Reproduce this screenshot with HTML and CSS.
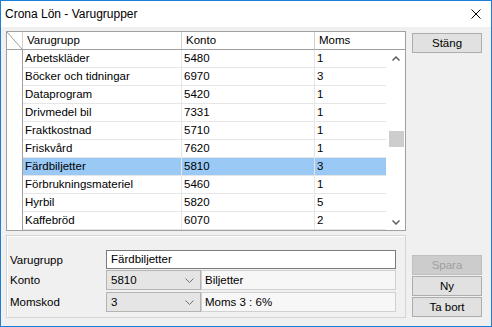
FILE: index.html
```html
<!DOCTYPE html>
<html lang="sv">
<head>
    <meta charset="UTF-8">
    <title>Crona Lön - Varugrupper</title>
    <link rel="stylesheet" href="styles.css">
</head>
<body>
    <div class="window">
        <div class="titlebar">
            <span class="title">Crona Lön - Varugrupper</span>
            <svg class="close" width="10" height="10" viewBox="0 0 10 10"><path d="M0.5 0.5 L9.5 9.5 M9.5 0.5 L0.5 9.5" stroke="#000" stroke-width="1" fill="none"/></svg>
        </div>

        <div class="content">
            <div class="main">
                <div class="grid">
                    <div class="grid-head">
                        <div class="corner">
                            <svg width="15" height="17" viewBox="0 0 15 17"><path d="M0 0 L15 17" stroke="#a0a0a0" stroke-width="1" fill="none"/></svg>
                        </div>
                        <div class="hcell c-name">Varugrupp</div>
                        <div class="hcell c-konto">Konto</div>
                        <div class="hcell c-moms">Moms</div>
                    </div>
                    <div class="grid-body">
                        <div class="rowheads"></div>
                        <div class="rows">
                            <div class="row"><div class="cell c-name">Arbetskläder</div><div class="cell c-konto">5480</div><div class="cell c-moms">1</div></div>
                            <div class="row"><div class="cell c-name">Böcker och tidningar</div><div class="cell c-konto">6970</div><div class="cell c-moms">3</div></div>
                            <div class="row"><div class="cell c-name">Dataprogram</div><div class="cell c-konto">5420</div><div class="cell c-moms">1</div></div>
                            <div class="row"><div class="cell c-name">Drivmedel bil</div><div class="cell c-konto">7331</div><div class="cell c-moms">1</div></div>
                            <div class="row"><div class="cell c-name">Fraktkostnad</div><div class="cell c-konto">5710</div><div class="cell c-moms">1</div></div>
                            <div class="row"><div class="cell c-name">Friskvård</div><div class="cell c-konto">7620</div><div class="cell c-moms">1</div></div>
                            <div class="row selected"><div class="cell c-name">Färdbiljetter</div><div class="cell c-konto">5810</div><div class="cell c-moms">3</div></div>
                            <div class="row"><div class="cell c-name">Förbrukningsmateriel</div><div class="cell c-konto">5460</div><div class="cell c-moms">1</div></div>
                            <div class="row"><div class="cell c-name">Hyrbil</div><div class="cell c-konto">5820</div><div class="cell c-moms">5</div></div>
                            <div class="row"><div class="cell c-name">Kaffebröd</div><div class="cell c-konto">6070</div><div class="cell c-moms">2</div></div>
                        </div>
                        <div class="scrollbar">
                            <svg class="arrow" width="8" height="5" viewBox="0 0 8 5"><path d="M0.5 4.5 L4 1 L7.5 4.5" stroke="#606060" stroke-width="1.5" fill="none"/></svg>
                            <div class="track"><div class="thumb"></div></div>
                            <svg class="arrow" width="8" height="5" viewBox="0 0 8 5"><path d="M0.5 0.5 L4 4 L7.5 0.5" stroke="#606060" stroke-width="1.5" fill="none"/></svg>
                        </div>
                    </div>
                </div>

                <div class="panel">
                    <div class="field">
                        <span class="label">Varugrupp</span>
                        <div class="textbox">Färdbiljetter</div>
                    </div>
                    <div class="field">
                        <span class="label">Konto</span>
                        <div class="combo">
                            <span>5810</span>
                            <svg width="9" height="5" viewBox="0 0 9 5"><path d="M0.5 0.5 L4.5 4.5 L8.5 0.5" stroke="#707070" stroke-width="1" fill="none"/></svg>
                        </div>
                        <div class="readonly">Biljetter</div>
                    </div>
                    <div class="field">
                        <span class="label">Momskod</span>
                        <div class="combo">
                            <span>3</span>
                            <svg width="9" height="5" viewBox="0 0 9 5"><path d="M0.5 0.5 L4.5 4.5 L8.5 0.5" stroke="#707070" stroke-width="1" fill="none"/></svg>
                        </div>
                        <div class="readonly">Moms 3 : 6%</div>
                    </div>
                </div>
            </div>

            <div class="buttons">
                <button class="btn">Stäng</button>
                <div class="btn-group">
                    <button class="btn" disabled>Spara</button>
                    <button class="btn">Ny</button>
                    <button class="btn">Ta bort</button>
                </div>
            </div>
        </div>
    </div>
</body>
</html>
```

FILE: styles.css
```css
body {
    margin: 0;
    font-family: 'Liberation Sans', Arial, sans-serif;
    font-size: 11.5px;
    color: #000;
    background: #fff;
}
.window {
    width: 492px;
    height: 327px;
    box-sizing: border-box;
    border: 1px solid #1c7fd6;
    background: #f0f0f0;
    display: flex;
    flex-direction: column;
}
.titlebar {
    height: 26px;
    background: #fff;
    display: flex;
    align-items: center;
    justify-content: space-between;
    padding: 0 10px 0 4px;
}
.title {
    font-size: 12px;
}
.close {
    display: block;
}
.content {
    flex: 1;
    display: flex;
    gap: 6px;
    padding: 4px 9px 8px 5px;
}
.main {
    width: 400px;
    display: flex;
    flex-direction: column;
    gap: 4px;
}

/* grid */
.grid {
    border: 1px solid #a0a0a0;
    background: #fff;
}
.grid-head {
    display: flex;
    height: 17px;
    border-bottom: 1px solid #a0a0a0;
}
.corner {
    width: 15px;
    border-right: 1px solid #d0d0d0;
}
.corner svg {
    display: block;
}
.hcell {
    line-height: 17px;
    padding-left: 4px;
    box-sizing: border-box;
    border-right: 1px solid #d0d0d0;
}
.c-name { width: 159px; }
.c-konto { width: 133px; }
.c-moms { width: 71px; }
.grid-head .c-moms {
    flex: 1;
    border-right: none;
}
.grid-body {
    display: flex;
}
.rowheads {
    width: 15px;
    border-right: 1px solid #a0a0a0;
}
.rows {
    width: 363px;
}
.row {
    display: flex;
    height: 17px;
    border-bottom: 1px solid #e6e6e6;
}
.row.selected {
    background: #99c9f4;
}
.cell {
    line-height: 17px;
    padding-left: 2px;
    box-sizing: border-box;
    border-right: 1px solid #e6e6e6;
    white-space: nowrap;
}
.row .c-moms {
    width: 71px;
    border-right: none;
}
.scrollbar {
    flex: 1;
    display: flex;
    flex-direction: column;
    align-items: center;
    padding: 6px 0 5px;
}
.arrow {
    display: block;
}
.track {
    flex: 1;
    align-self: stretch;
    padding: 70px 1px 0 3px;
}
.thumb {
    height: 16px;
    background: #cdcdcd;
}

/* edit panel */
.panel {
    flex: 1;
    border: 1px solid #d5d5d5;
    box-shadow: inset 1px 1px 0 #fff;
    padding: 14px 0 0 3px;
    display: flex;
    flex-direction: column;
    gap: 1px;
}
.field {
    display: flex;
    align-items: center;
}
.label {
    width: 96px;
}
.textbox {
    width: 290px;
    height: 19px;
    box-sizing: border-box;
    border: 1px solid #7a7a7a;
    background: #fff;
    padding-left: 4px;
    line-height: 17px;
}
.combo {
    width: 95px;
    height: 20px;
    box-sizing: border-box;
    border: 1px solid #b4b4b4;
    background: #e5e5e5;
    display: flex;
    align-items: center;
    justify-content: space-between;
    padding: 0 6px 0 4px;
}
.combo svg {
    display: block;
}
.readonly {
    width: 195px;
    height: 20px;
    box-sizing: border-box;
    border: 1px solid #d0d0d0;
    background: #f7f7f7;
    padding-left: 3px;
    line-height: 18px;
}
.field + .field + .field {
    margin-top: 1px;
}

/* buttons */
.buttons {
    width: 70px;
    display: flex;
    flex-direction: column;
    justify-content: space-between;
    padding: 2px 0 1px;
}
.btn-group {
    display: flex;
    flex-direction: column;
    gap: 1px;
}
.btn {
    height: 20px;
    width: 70px;
    font-family: inherit;
    font-size: 11.5px;
    color: #000;
    background: #e1e1e1;
    border: 1px solid #adadad;
    padding: 0;
}
.btn:disabled {
    background: #cccccc;
    border-color: #bfbfbf;
    color: #a0a0a0;
}
```
